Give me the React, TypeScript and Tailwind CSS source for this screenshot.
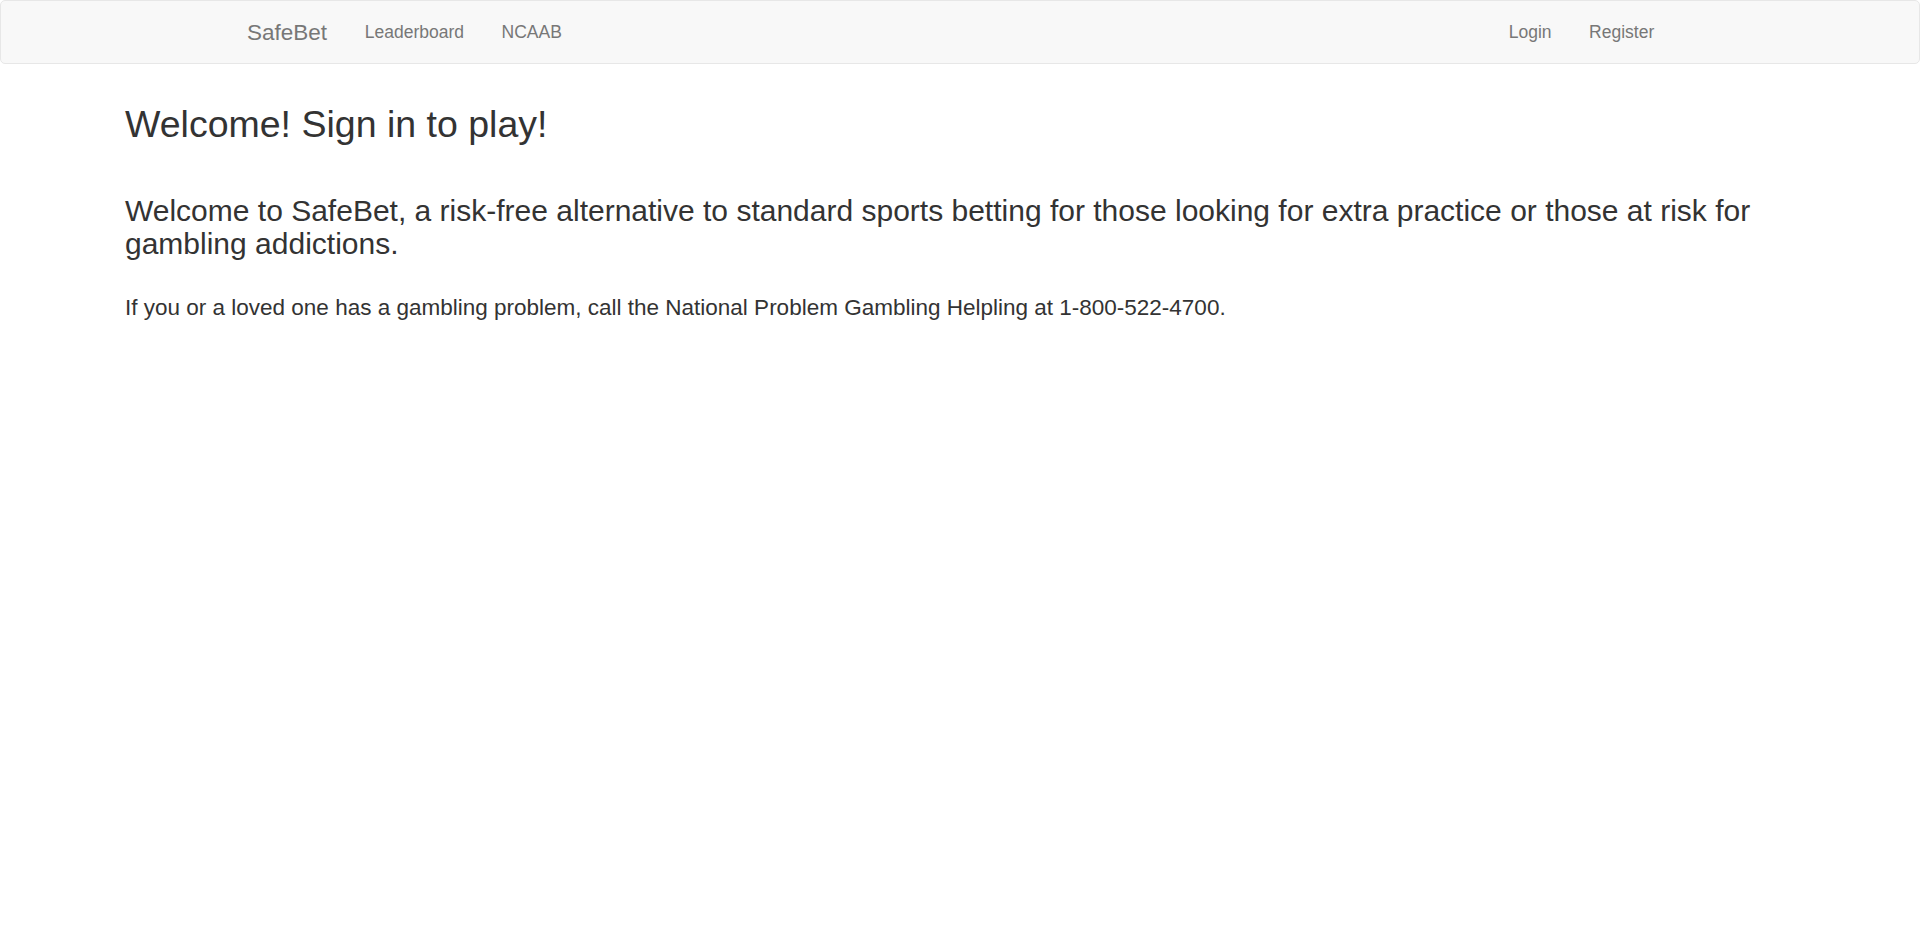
const leftLinks = ['Leaderboard', 'NCAAB'];
const rightLinks = ['Login', 'Register'];

const NavBar = () => {
  return (
    <nav className="h-[64px] border border-[#e7e7e7] bg-[#f8f8f8] rounded-[5px]">
      <div className="mx-auto w-[1462px] h-full flex items-center">
        <a className="pl-[18px] pr-[19px] text-[22.5px] leading-[25px] text-[#777]" href="#">
          SafeBet
        </a>
        {leftLinks.map((name) => (
          <a key={name} className="px-[18.75px] text-[17.5px] text-[#777]" href="#">
            {name}
          </a>
        ))}
        <div className="ml-auto flex pr-[18px]">
          {rightLinks.map((name) => (
            <a key={name} className="px-[18.75px] text-[17.5px] text-[#777]" href="#">
              {name}
            </a>
          ))}
        </div>
      </div>
    </nav>
  );
};

export default function App() {
  return (
    <div className="min-h-screen bg-white text-[#333] font-['Liberation_Sans',Arial,sans-serif]">
      <NavBar />
      <main className="px-[125px]">
        <h2 className="mt-[40px] text-[37.5px] leading-[41.25px]">Welcome! Sign in to play!</h2>
        <h3 className="mt-[49px] text-[30px] leading-[33px]">
          Welcome to SafeBet, a risk-free alternative to standard sports betting for those looking for extra practice or
          those at risk for gambling addictions.
        </h3>
        <h4 className="mt-[36px] text-[22.5px] leading-[24.75px]">
          If you or a loved one has a gambling problem, call the National Problem Gambling Helpling at 1-800-522-4700.
        </h4>
      </main>
    </div>
  );
}
